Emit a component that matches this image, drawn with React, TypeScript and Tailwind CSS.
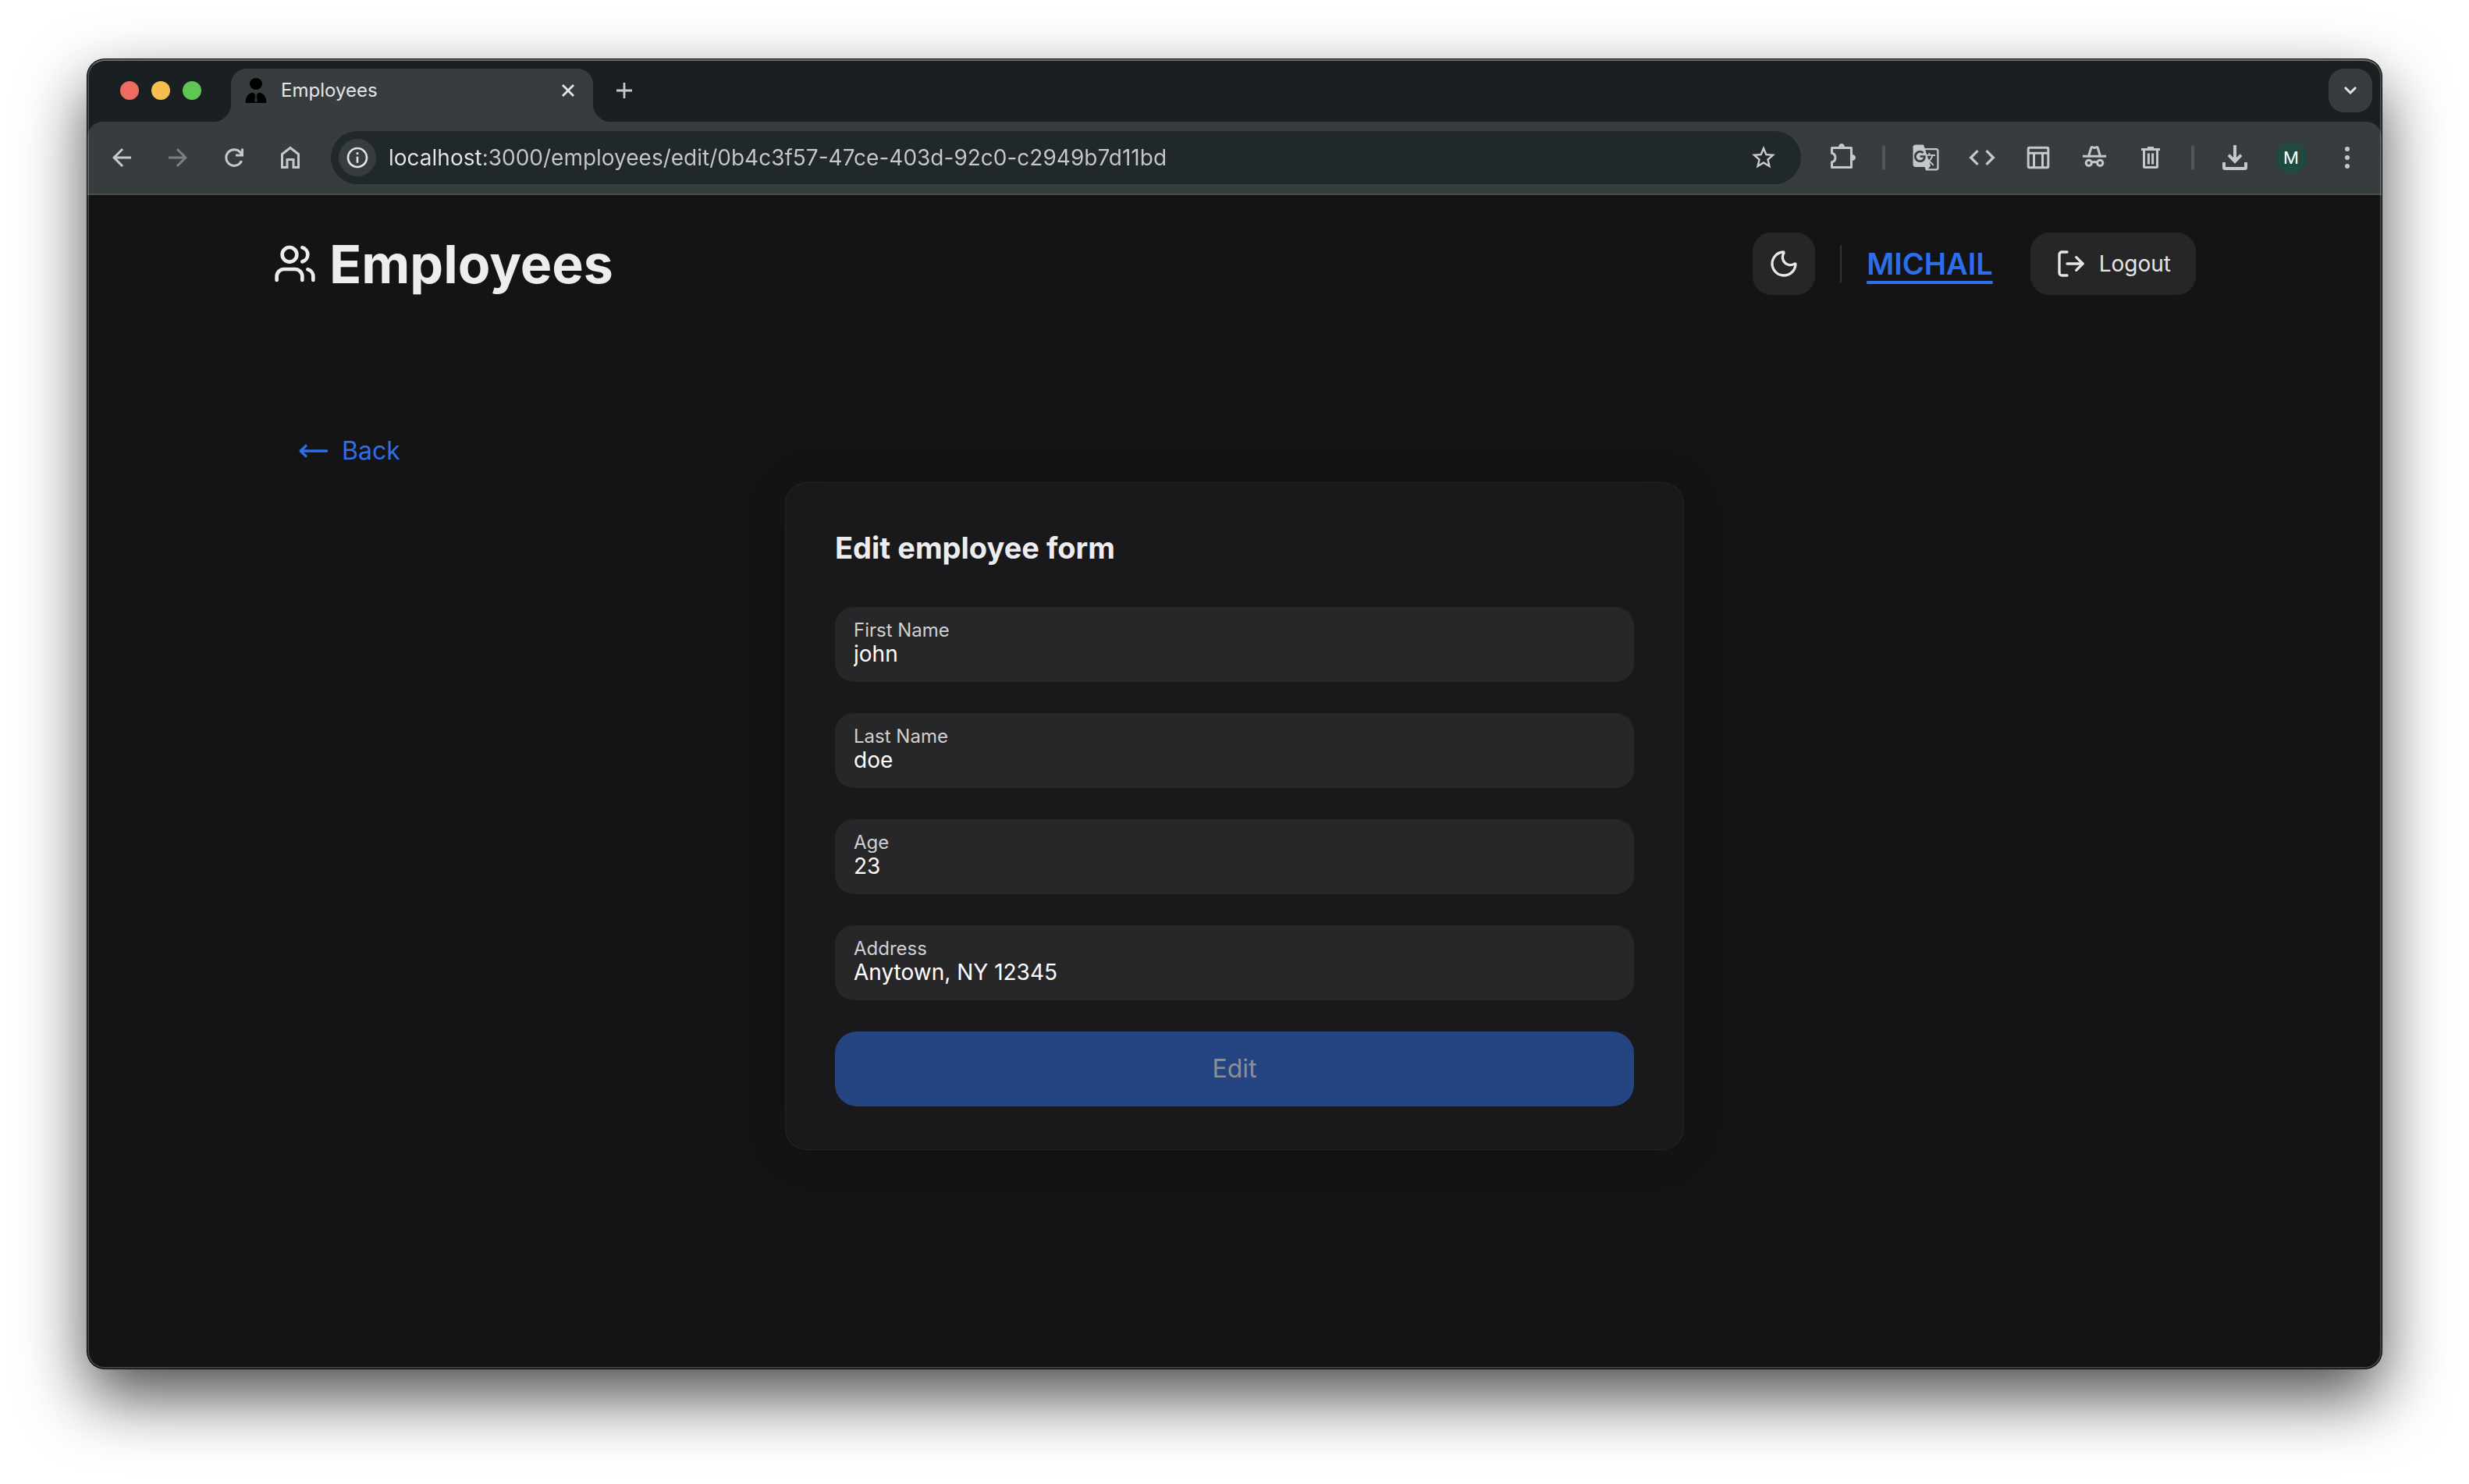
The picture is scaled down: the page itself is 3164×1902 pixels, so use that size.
import type { ReactNode } from "react";
import { LogOut, Moon, MoveLeft, Users } from "lucide-react";
import {
  MdArrowBack,
  MdArrowForward,
  MdCode,
  MdGTranslate,
  MdInfoOutline,
  MdStarBorder,
} from "react-icons/md";

function Glyph({ children, width = 3 }: { children: ReactNode; width?: number }) {
  return (
    <svg
      viewBox="0 0 48 48"
      className="size-12"
      fill="none"
      stroke="currentColor"
      strokeWidth={width}
      aria-hidden="true"
    >
      {children}
    </svg>
  );
}

const ReloadIcon = () => (
  <Glyph>
    <path d="M33.6 28.2A10.3 10.3 0 1 1 32 17.4L34 20" />
    <path d="M34.5 12.5V21H26" />
  </Glyph>
);

const HomeIcon = () => (
  <Glyph>
    <path d="M13.5 36.5V19.5L24 11.5L34.5 19.5V36.5H28V26.5H20V36.5Z" />
  </Glyph>
);

const PuzzleIcon = () => (
  <Glyph>
    <path
      strokeLinejoin="round"
      d="M11.5 11.5H36.5V36.5H11.5V29.8A6 6 0 0 0 11.5 18.2Z"
    />
    <path stroke="none" fill="currentColor" d="M20 10.5a4 4.5 0 0 1 8 0zM37.5 20a4.5 4 0 0 1 0 8z" />
  </Glyph>
);

const LayoutIcon = () => (
  <Glyph>
    <rect x="11.2" y="11.2" width="25.6" height="25.6" rx="1.5" />
    <path d="M11 18.3H37M18.5 18.3V37M29.5 18.3V37" />
  </Glyph>
);

const IncognitoIcon = () => (
  <Glyph>
    <path d="M9 22.3H39M16.6 22L19.8 11.3Q20.2 10.2 21.4 10.6L24 11.4L26.6 10.6Q27.8 10.2 28.2 11.3L31.4 22" />
    <circle cx="16.8" cy="30.8" r="3.6" />
    <circle cx="31.2" cy="30.8" r="3.6" />
    <path d="M20 30.4Q24 28.6 28 30.4" />
  </Glyph>
);

const TrashIcon = () => (
  <Glyph>
    <path d="M12 13.5H36M20 11.5H28M15.5 14V35.5Q15.5 36.5 16.5 36.5H31.5Q32.5 36.5 32.5 35.5V14M21.4 18.5V32.5M26.6 18.5V32.5" />
  </Glyph>
);

const DownloadIcon = () => (
  <Glyph width={4}>
    <path d="M24 8V29M16 20.7L24 28.8L32 20.7M10 30V36.5Q10 38 11.5 38H36.5Q38 38 38 36.5V30" />
  </Glyph>
);

const DotsIcon = () => (
  <Glyph>
    <g fill="currentColor" stroke="none">
      <circle cx="24" cy="13" r="3" />
      <circle cx="24" cy="24" r="3" />
      <circle cx="24" cy="35" r="3" />
    </g>
  </Glyph>
);

function Favicon() {
  return (
    <svg viewBox="0 0 32 32" className="size-8" aria-hidden="true">
      <ellipse cx="16" cy="7.5" rx="8" ry="7.5" />
      <path d="M2.5 32C3 25 4 20.5 12 18.5L16 22L20 18.5C28 20.5 29 25 29.5 32Z" />
      <path d="M14.5 20.5h3l-.6 2.5 1.1 6-2 3-2-3 1.1-6z" fill="#2a3031" />
    </svg>
  );
}

function ToolButton({
  label,
  children,
  dim = false,
}: {
  label: string;
  children: ReactNode;
  dim?: boolean;
}) {
  return (
    <button
      type="button"
      aria-label={label}
      className={
        dim
          ? "flex size-14 shrink-0 items-center justify-center text-[#798082]"
          : "flex size-14 shrink-0 items-center justify-center text-[#c3c8ca]"
      }
    >
      {children}
    </button>
  );
}

const Divider = () => <span className="mx-2 h-8 w-1 shrink-0 rounded-full bg-[#4f5658]" />;

function TabStrip() {
  return (
    <div className="flex h-20 items-end bg-[#1a2022] pr-3">
      <div className="flex h-[68px] items-center gap-4 pr-[38px] pb-3 pl-[42px]">
        <button type="button" aria-label="Close window" className="size-6 rounded-full bg-[#ed6b60]" />
        <button type="button" aria-label="Minimize window" className="size-6 rounded-full bg-[#f5bf4f]" />
        <button type="button" aria-label="Zoom window" className="size-6 rounded-full bg-[#61c555]" />
      </div>
      <div className="relative flex h-[68px] w-[464px] items-center rounded-t-[20px] bg-[#373d3f] pr-5 pb-3 pl-4">
        <span className="absolute bottom-0 -left-6 size-6 bg-[radial-gradient(circle_at_0_0,transparent_24px,#373d3f_25px)]" />
        <span className="absolute -right-6 bottom-0 size-6 bg-[radial-gradient(circle_at_100%_0,transparent_24px,#373d3f_25px)]" />
        <Favicon />
        <span className="ml-4 flex-1 text-[24px] leading-8 text-[#e3e5e6]">Employees</span>
        <button type="button" aria-label="Close tab" className="text-[#e3e5e6]">
          <svg viewBox="0 0 24 24" className="size-6" fill="none" stroke="currentColor" strokeWidth="2.8">
            <path d="M5 5L19 19M19 5L5 19" />
          </svg>
        </button>
      </div>
      <button type="button" aria-label="New tab" className="mb-7 ml-7 text-[#c3c8ca]">
        <svg viewBox="0 0 24 24" className="size-6" fill="none" stroke="currentColor" strokeWidth="2.8">
          <path d="M12 2V22M2 12H22" />
        </svg>
      </button>
      <button
        type="button"
        aria-label="Search tabs"
        className="mb-3 ml-auto flex size-14 items-center justify-center rounded-[20px] bg-[#373d3f] text-[#e3e3e3]"
      >
        <svg viewBox="0 0 24 24" className="size-6" fill="none" stroke="currentColor" strokeWidth="3">
          <path d="M5 8L12 15L19 8" />
        </svg>
      </button>
    </div>
  );
}

function Toolbar() {
  return (
    <div className="bg-[#1a2022]">
      <div className="flex h-[94px] items-center gap-4 rounded-t-[20px] border-b-2 border-[#4a4e4f] bg-[#373d3f] px-4">
        <ToolButton label="Back">
          <MdArrowBack className="size-9" />
        </ToolButton>
        <ToolButton label="Forward" dim>
          <MdArrowForward className="size-9" />
        </ToolButton>
        <ToolButton label="Reload">
          <ReloadIcon />
        </ToolButton>
        <ToolButton label="Home">
          <HomeIcon />
        </ToolButton>
        <div className="mx-2 flex h-[68px] min-w-0 flex-1 items-center rounded-full bg-[#20282a] pr-5 pl-[10px]">
          <button
            type="button"
            aria-label="View site information"
            className="flex size-12 shrink-0 items-center justify-center rounded-full bg-[#373d3f] text-[#e3e3e3]"
          >
            <MdInfoOutline className="size-8" />
          </button>
          <input
            aria-label="Address"
            defaultValue="localhost:3000/employees/edit/0b4c3f57-47ce-403d-92c0-c2949b7d11bd"
            className="ml-4 h-10 min-w-0 flex-1 bg-[linear-gradient(90deg,#e6e6e6_122px,#c8c8c8_122px)] bg-clip-text text-[28px] leading-10 text-transparent outline-none"
          />
          <button
            type="button"
            aria-label="Bookmark this page"
            className="flex size-14 shrink-0 items-center justify-center text-[#cbcbcb]"
          >
            <MdStarBorder className="size-9" />
          </button>
        </div>
        <ToolButton label="Extensions">
          <PuzzleIcon />
        </ToolButton>
        <Divider />
        <ToolButton label="Translate">
          <MdGTranslate className="size-9" />
        </ToolButton>
        <ToolButton label="View source">
          <MdCode className="size-10" />
        </ToolButton>
        <ToolButton label="Layout">
          <LayoutIcon />
        </ToolButton>
        <ToolButton label="Incognito window">
          <IncognitoIcon />
        </ToolButton>
        <ToolButton label="Delete browsing data">
          <TrashIcon />
        </ToolButton>
        <Divider />
        <ToolButton label="Downloads">
          <DownloadIcon />
        </ToolButton>
        <ToolButton label="Profile">
          <span className="flex size-10 items-center justify-center rounded-full bg-[#1f4a3e] text-[22px] text-white">
            M
          </span>
        </ToolButton>
        <ToolButton label="Menu">
          <DotsIcon />
        </ToolButton>
      </div>
    </div>
  );
}

function Header() {
  return (
    <header className="flex items-center justify-between">
      <div className="flex items-center gap-4 text-[#ededef]">
        <Users className="size-14" />
        <h1 className="text-[68px] leading-[80px] font-bold">Employees</h1>
      </div>
      <div className="flex items-center">
        <button
          type="button"
          aria-label="Toggle theme"
          className="flex size-20 items-center justify-center rounded-3xl bg-[#262628] text-[#e6e6e7]"
        >
          <Moon className="size-10" />
        </button>
        <span className="mx-8 h-12 w-[2px] bg-[#333335]" />
        <a
          href="#profile"
          className="text-[38px] leading-[48px] font-semibold text-[#2e6eea] underline decoration-4 underline-offset-8"
        >
          MICHAIL
        </a>
        <button
          type="button"
          className="ml-12 flex h-20 items-center gap-4 rounded-3xl bg-[#262628] px-8 text-[28px] text-[#e6e6e7]"
        >
          <LogOut className="size-10" />
          Logout
        </button>
      </div>
    </header>
  );
}

const fields = [
  { id: "first-name", label: "First Name", value: "john" },
  { id: "last-name", label: "Last Name", value: "doe" },
  { id: "age", label: "Age", value: "23" },
  { id: "address", label: "Address", value: "Anytown, NY 12345" },
];

function EditForm() {
  return (
    <form className="mx-auto mt-4 w-full max-w-[1152px] rounded-[28px] bg-[#19191b] px-16 pt-16 pb-14 shadow-[inset_0_0_0_1px_#252527,0_4px_60px_rgba(0,0,0,0.12)]">
      <h2 className="text-[38px] leading-10 font-bold text-[#ededef]">Edit employee form</h2>
      <div className="mt-14 flex flex-col gap-10">
        {fields.map((field) => (
          <div key={field.id} className="flex h-24 flex-col rounded-3xl bg-[#27272a] px-6 pt-4">
            <label htmlFor={field.id} className="text-[24px] leading-7 text-[#d0d0d2]">
              {field.label}
            </label>
            <input
              id={field.id}
              defaultValue={field.value}
              className="h-8 w-full bg-transparent text-[28px] leading-8 text-white outline-none"
            />
          </div>
        ))}
        <button
          type="submit"
          disabled
          className="h-24 rounded-[28px] bg-[#244482] text-[32px] text-[#8f8f90]"
        >
          Edit
        </button>
      </div>
    </form>
  );
}

export default function App() {
  return (
    <div className="flex min-h-screen flex-col bg-white px-28 pt-[76px] pb-[148px] font-['Inter',sans-serif]">
      <div className="relative flex flex-1 flex-col overflow-hidden rounded-[22px] bg-[#141414] shadow-[0_0_0_1px_#000,0_36px_84px_rgba(0,0,0,0.7)]">
        <TabStrip />
        <Toolbar />
        <main className="mx-auto w-full max-w-[2560px] px-12 pt-12">
          <Header />
          <a
            href="#back"
            className="mt-44 ml-8 flex w-fit items-center gap-4 text-[32px] leading-[48px] text-[#2e6eea]"
          >
            <MoveLeft className="size-10" />
            Back
          </a>
          <EditForm />
        </main>
        <div className="pointer-events-none absolute inset-0 rounded-[22px] border-2 border-white/20 border-t-white/35" />
      </div>
    </div>
  );
}
